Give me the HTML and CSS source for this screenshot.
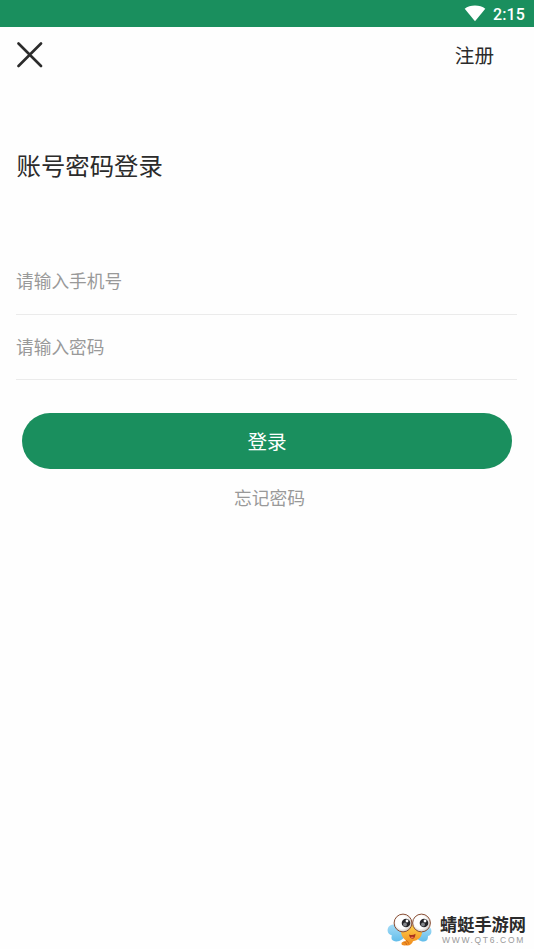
FILE: index.html
```html
<!DOCTYPE html>
<html lang="zh-CN">
<head>
<meta charset="utf-8">
<meta name="viewport" content="width=device-width, initial-scale=1">
<title>账号密码登录</title>
<link rel="stylesheet" href="styles.css">
</head>
<body>
<div class="statusbar">
  <svg class="wifi" width="22" height="17" viewBox="0 0 22 17"><path d="M11 16.2 .7 3.7C3.4 1.7 7 .6 11 .6s7.600 1.100 10.300 3.100z" fill="#fff"/></svg>
  <span class="clock">2:15</span>
</div>
<header class="header">
  <svg class="close" width="26" height="26" viewBox="0 0 26 26"><path d="M1.500 1.500l22.500 22.500M24 1.500l-22.500 22.500" stroke="#2b2b2b" stroke-width="2.600" stroke-linecap="round"/></svg>
  <span class="register">注册</span>
</header>
<main class="login">
  <h1 class="title">账号密码登录</h1>
  <form class="form">
    <input class="field phone" type="text" placeholder="请输入手机号" aria-label="请输入手机号">
    <input class="field password" type="password" placeholder="请输入密码" aria-label="请输入密码">
    <button class="submit" type="button">登录</button>
    <span class="forgot">忘记密码</span>
  </form>
</main>
<footer class="brand">
  <svg class="mascot" width="46" height="34" viewBox="0 0 46 34">
    <defs>
      <linearGradient id="wing" x1="0" y1="0" x2="0" y2="1"><stop offset="0" stop-color="#a5dcf7"/><stop offset="1" stop-color="#62bdea"/></linearGradient>
      <linearGradient id="face" x1="0" y1="0" x2="0" y2="1"><stop offset="0" stop-color="#ffd14a"/><stop offset="1" stop-color="#f08a1d"/></linearGradient>
      <radialGradient id="eye" cx=".45" cy=".45" r=".55"><stop offset=".65" stop-color="#fff"/><stop offset="1" stop-color="#cfc8c2"/></radialGradient>
    </defs>
    <g fill="url(#wing)">
      <path d="M17 18C11 10 3 10 1 15c-1.500 4 1 7 4 7.500-1.500 3 0 5.500 4 6 4 .3 8-3 10-7z"/>
      <path d="M29 20c5-8 13-9 15-4 1.500 4-1 7-3 7 0 3.500-1 5-4 5.500-4 .2-7-2.500-9-6z"/>
    </g>
    <path d="M14 18c0-5 6-7 11-6 6-1 10 2 10 7 0 5-4 8.500-9 9.300-1 3-4 5-7 4-2 .6-5 0-4.500-2 .3-1.800 3-1.500 4.500-2.600C15.500 25 14 22 14 18z" fill="url(#face)"/>
    <path d="M16.500 29c2 .2 3 1 3 3M19 27.500c1.500.5 2.500 1.500 2.500 3" stroke="#c65b16" stroke-width=".8" fill="none"/>
    <path d="M22 21.500c2.500 1 4.500.7 6.500-.8-.1 3-1.300 5-3.200 5-1.700-.1-2.900-1.800-3.300-4.200z" fill="#a8321b"/>
    <path d="M23.700 24.300c1-.6 2.200-.6 3.100-.1-.7 1.300-2.100 1.600-3.100.1z" fill="#ef725c"/>
    <circle cx="16" cy="10" r="8.900" fill="url(#eye)" stroke="#8b5036" stroke-width="1"/>
    <circle cx="34.500" cy="10" r="8.900" fill="url(#eye)" stroke="#8b5036" stroke-width="1"/>
    <circle cx="19" cy="10" r="4.300" fill="#242428"/><circle cx="37" cy="10" r="4.300" fill="#242428"/>
    <circle cx="18" cy="11.500" r="1.900" fill="#84878b"/><circle cx="36" cy="11.500" r="1.900" fill="#84878b"/>
    <circle cx="20" cy="8" r="1.400" fill="#fff"/><circle cx="38" cy="8" r="1.400" fill="#fff"/>
  </svg>
  <div class="brand-text">
    <span class="brand-name">蜻蜓手游网</span>
    <span class="brand-url">WWW.QT6.COM</span>
  </div>
</footer>
</body>
</html>
```
FILE: styles.css
```css
* { box-sizing: border-box; }
body {
  margin: 0;
  height: 949px;
  display: flex;
  flex-direction: column;
  overflow: hidden;
  background: #fefefe;
  color: #2b2b2b;
  font-family: "Noto Sans CJK SC", sans-serif;
}
.statusbar {
  height: 27px;
  flex: none;
  display: flex;
  justify-content: flex-end;
  align-items: center;
  gap: 7px;
  padding: 2px 9px 0 0;
  background: #1a8f5e;
}
.wifi { margin-top: -3px; }
.clock {
  color: #fff;
  font: 500 16px/20px Roboto, sans-serif;
  letter-spacing: .1px;
}
.header {
  height: 56px;
  flex: none;
  display: flex;
  justify-content: space-between;
  align-items: center;
  padding: 0 40px 0 17px;
}
.register { font-size: 19.6px; line-height: 28px; }
.login { padding: 64px 16px 0; }
.title {
  margin: 0;
  padding-left: .5px;
  font-size: 24.4px;
  line-height: 36px;
  font-weight: 400;
}
.form {
  display: flex;
  flex-direction: column;
  padding-top: 66px;
}
.field {
  width: 501px;
  height: 65px;
  margin: 0;
  padding: 0 0 2px;
  border: 0;
  border-bottom: 1px solid #ebebeb;
  outline: 0;
  background: none;
  font-family: inherit;
  font-size: 17.7px;
}
.phone {
  height: 66px;
  padding-bottom: 3px;
}
.field::placeholder { color: #999; opacity: 1; }
.submit {
  width: 490px;
  height: 55.5px;
  margin: 33px 0 0 6px;
  padding: 0 0 1px;
  border: 0;
  border-radius: 28px;
  background: #1a8f5e;
  color: #fff;
  font-family: inherit;
  font-size: 19.6px;
}
.forgot {
  margin: 15.5px 0 0 5px;
  align-self: center;
  color: #999;
  font-size: 17.8px;
  line-height: 26px;
}
.brand {
  display: flex;
  justify-content: flex-end;
  align-items: flex-end;
  gap: 7px;
  margin-top: auto;
  padding: 0 8px 3px 0;
}
.mascot { margin-bottom: -1px; }
.brand-text {
  display: flex;
  flex-direction: column;
  margin-bottom: 1px;
}
.brand-name {
  font-size: 17.2px;
  line-height: 22px;
  font-weight: 700;
}
.brand-url {
  color: #999;
  font: 8.500px/10px "Liberation Sans", sans-serif;
  letter-spacing: 1.650px;
  padding-left: 2px;
  margin-right: -3px;
}
```
